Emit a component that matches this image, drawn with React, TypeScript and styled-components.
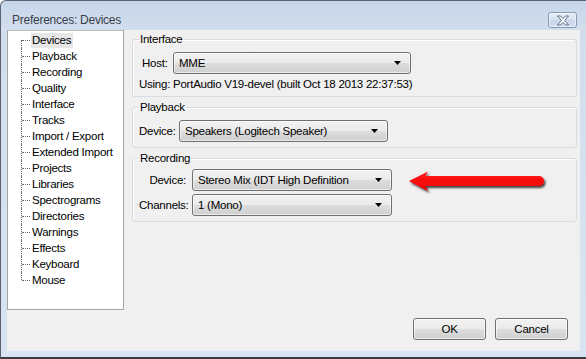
import React from "react";
import styled, { createGlobalStyle } from "styled-components";

const GlobalStyle = createGlobalStyle`
  html, body {
    margin: 0;
    padding: 0;
    background: #ffffff;
  }
  body {
    font-family: "Liberation Sans", Arial, sans-serif;
    font-size: 11.5px;
    letter-spacing: -0.25px;
    color: #000;
  }
`;

const PAGES = [
  "Devices",
  "Playback",
  "Recording",
  "Quality",
  "Interface",
  "Tracks",
  "Import / Export",
  "Extended Import",
  "Projects",
  "Libraries",
  "Spectrograms",
  "Directories",
  "Warnings",
  "Effects",
  "Keyboard",
  "Mouse",
];

const Preferences = () => {
  return (
    <Window>
      <TitleBar>
        <Title>Preferences: Devices</Title>
        <CloseButton aria-label="Close">
          <svg width="14" height="11" viewBox="0 0 14 11">
            <path
              d="M1.5 1 H4.5 L7 3.6 L9.5 1 H12.5 L8.6 5.5 L12.5 10 H9.5 L7 7.4 L4.5 10 H1.5 L5.4 5.5 Z"
              fill="#ffffff"
              stroke="#5c6e86"
              strokeWidth="1"
              strokeLinejoin="round"
            />
          </svg>
        </CloseButton>
      </TitleBar>

      <Client>
        <Body>
          <Tree>
            {PAGES.map((name, i) => (
              <TreeItem key={name}>
                <Connector
                  $first={i === 0}
                  $last={i === PAGES.length - 1}
                />
                <TreeLabel $selected={i === 0}>{name}</TreeLabel>
              </TreeItem>
            ))}
          </Tree>

          <Panels>
            <Group $top={2}>
              <Legend>Interface</Legend>
              <Row>
                <Label $width={31} $indent={3}>
                  Host:
                </Label>
                <Combo $width={238}>
                  <span>MME</span>
                  <Caret />
                </Combo>
              </Row>
              <Info>Using: PortAudio V19-devel (built Oct 18 2013 22:37:53)</Info>
            </Group>

            <Group $top={3}>
              <Legend>Playback</Legend>
              <Row>
                <Label $width={40}>Device:</Label>
                <Combo $width={209}>
                  <span>Speakers (Logitech Speaker)</span>
                  <Caret />
                </Combo>
              </Row>
            </Group>

            <Group $top={3}>
              <Legend>Recording</Legend>
              <FieldGrid>
                <GridLabel>Device:</GridLabel>
                <Row>
                  <Combo $width={200}>
                    <span>Stereo Mix (IDT High Definition</span>
                    <Caret />
                  </Combo>
                  <Arrow />
                </Row>
                <GridLabel>Channels:</GridLabel>
                <Combo $width={200}>
                  <span>1 (Mono)</span>
                  <Caret />
                </Combo>
              </FieldGrid>
            </Group>
          </Panels>
        </Body>

        <Footer>
          <Button>OK</Button>
          <Button>Cancel</Button>
        </Footer>
      </Client>
    </Window>
  );
};

const Arrow = () => (
  <ArrowSvg width="142" height="30" viewBox="0 0 142 30">
    <defs>
      <linearGradient id="arrowFill" x1="0" y1="0" x2="0" y2="1">
        <stop offset="0" stopColor="#ff1a1a" />
        <stop offset="1" stopColor="#f00000" />
      </linearGradient>
      <filter id="arrowShadow" x="-10%" y="-40%" width="130%" height="190%">
        <feDropShadow dx="1.5" dy="2" stdDeviation="1.2" floodColor="#000" floodOpacity="0.75" />
      </filter>
    </defs>
    <path
      d="M2 13 L21 3.5 L18.5 8 H132 A5 5 0 0 1 132 18 H18.5 L21 23 Z"
      fill="url(#arrowFill)"
      filter="url(#arrowShadow)"
      strokeLinejoin="round"
    />
  </ArrowSvg>
);

const Caret = () => (
  <CaretSvg width="7" height="4" viewBox="0 0 7 4">
    <path d="M0 0 H7 L3.5 4 Z" fill="#000" />
  </CaretSvg>
);

export default function App() {
  return (
    <>
      <GlobalStyle />
      <Preferences />
    </>
  );
}

const Window = styled.div`
  width: 586px;
  height: 359px;
  box-sizing: border-box;
  display: flex;
  flex-direction: column;
  background: linear-gradient(180deg, #c6d6ea 0px, #d2deed 30px, #d8e4f1 100%);
  border-top: 1px solid #5a6270;
  border-left: 1px solid #5a6270;
  border-bottom: 2px solid #3c3c3c;
  border-top-left-radius: 6px;
  overflow: hidden;
`;

const TitleBar = styled.div`
  height: 29px;
  display: flex;
  align-items: center;
  justify-content: space-between;
  padding: 0 9px 0 11px;
`;

const Title = styled.div`
  color: #3a3f4c;
  font-size: 12px;
  padding-top: 8px;
`;

const CloseButton = styled.div`
  width: 29px;
  height: 16px;
  margin-top: 9px;
  box-sizing: border-box;
  display: flex;
  align-items: center;
  justify-content: center;
  border: 1px solid #8898b0;
  border-radius: 3px;
  background: linear-gradient(180deg, #e6edf6 0%, #d5e0ee 50%, #c8d6e8 51%, #d3dff0 100%);
  box-shadow: inset 0 0 0 1px rgba(255, 255, 255, 0.5);
`;

const Client = styled.div`
  flex: 1;
  margin: 0 6px 6px 6px;
  background: #f0f0f0;
  display: flex;
  flex-direction: column;
`;

const Body = styled.div`
  display: flex;
  align-items: flex-start;
  gap: 8px;
`;

const Tree = styled.ul`
  list-style: none;
  margin: 0;
  padding: 1px 0 0 13px;
  width: 117px;
  height: 280px;
  box-sizing: border-box;
  background: #ffffff;
  border: 1px solid #a5a5a5;
  border-top-color: #b8b8b8;
`;

const TreeItem = styled.li`
  height: 16px;
  display: flex;
  align-items: center;
`;

const Connector = styled.span<{ $first: boolean; $last: boolean }>`
  position: relative;
  width: 10px;
  height: 16px;
  flex: none;

  &::before {
    content: "";
    position: absolute;
    left: 0;
    top: ${(p) => (p.$first ? "8px" : "0")};
    bottom: ${(p) => (p.$last ? "8px" : "0")};
    border-left: 1px dotted #6a6a6a;
  }

  &::after {
    content: "";
    position: absolute;
    left: 1px;
    right: 1px;
    top: 8px;
    border-top: 1px dotted #6a6a6a;
  }
`;

const TreeLabel = styled.span<{ $selected: boolean }>`
  padding: 0 2px 0 1px;
  line-height: 15px;
  white-space: nowrap;
  background: ${(p) => (p.$selected ? "#e6e6e6" : "transparent")};
`;

const Panels = styled.div`
  flex: 1;
  margin-right: 3px;
  display: flex;
  flex-direction: column;
`;

const Group = styled.fieldset<{ $top: number }>`
  margin: ${(p) => p.$top}px 0 0 0;
  padding: 0 6px 5px 6px;
  border: 1px solid #d5dce3;
  border-radius: 3px;
  box-shadow: inset 1px 1px 0 #ffffff;
  min-width: 0;
`;

const Legend = styled.legend`
  padding: 0 1px;
  line-height: 15px;
  color: #000;
`;

const Row = styled.div`
  display: flex;
  align-items: center;
  margin-top: 5px;
`;

const Label = styled.span<{ $width: number; $indent?: number }>`
  width: ${(p) => p.$width}px;
  margin-left: ${(p) => p.$indent ?? 0}px;
  flex: none;
  white-space: nowrap;
`;

const Info = styled.div`
  margin-top: 3px;
  line-height: 14px;
  white-space: nowrap;
`;

const FieldGrid = styled.div`
  display: grid;
  grid-template-columns: 53px auto;
  row-gap: 3px;
  align-items: center;
  margin-top: 3px;

  > ${Row} {
    margin-top: 0;
  }
`;

const GridLabel = styled.span`
  text-align: right;
  padding-right: 6px;
  white-space: nowrap;
`;

const Combo = styled.div<{ $width: number }>`
  width: ${(p) => p.$width}px;
  height: 22px;
  box-sizing: border-box;
  flex: none;
  display: flex;
  align-items: center;
  justify-content: space-between;
  padding: 0 9px 0 5px;
  border: 1px solid #707070;
  border-radius: 3px;
  background: linear-gradient(180deg, #f2f2f2 0%, #ebebeb 48%, #dddddd 52%, #cfcfcf 100%);
  box-shadow: inset 0 0 0 1px rgba(255, 255, 255, 0.6);
  white-space: nowrap;
  overflow: hidden;
`;

const CaretSvg = styled.svg`
  flex: none;
  margin-left: 6px;
`;

const ArrowSvg = styled.svg`
  flex: none;
  margin: -1px 0 -7px 15px;
`;

const Footer = styled.div`
  margin-top: auto;
  display: flex;
  justify-content: flex-end;
  gap: 9px;
  padding: 0 12px 11px 0;
`;

const Button = styled.div`
  width: 73px;
  height: 22px;
  box-sizing: border-box;
  display: flex;
  align-items: center;
  justify-content: center;
  border: 1px solid #707070;
  border-radius: 3px;
  background: linear-gradient(180deg, #f2f2f2 0%, #ebebeb 48%, #dddddd 52%, #cfcfcf 100%);
  box-shadow: inset 0 0 0 1px rgba(255, 255, 255, 0.6);
`;
